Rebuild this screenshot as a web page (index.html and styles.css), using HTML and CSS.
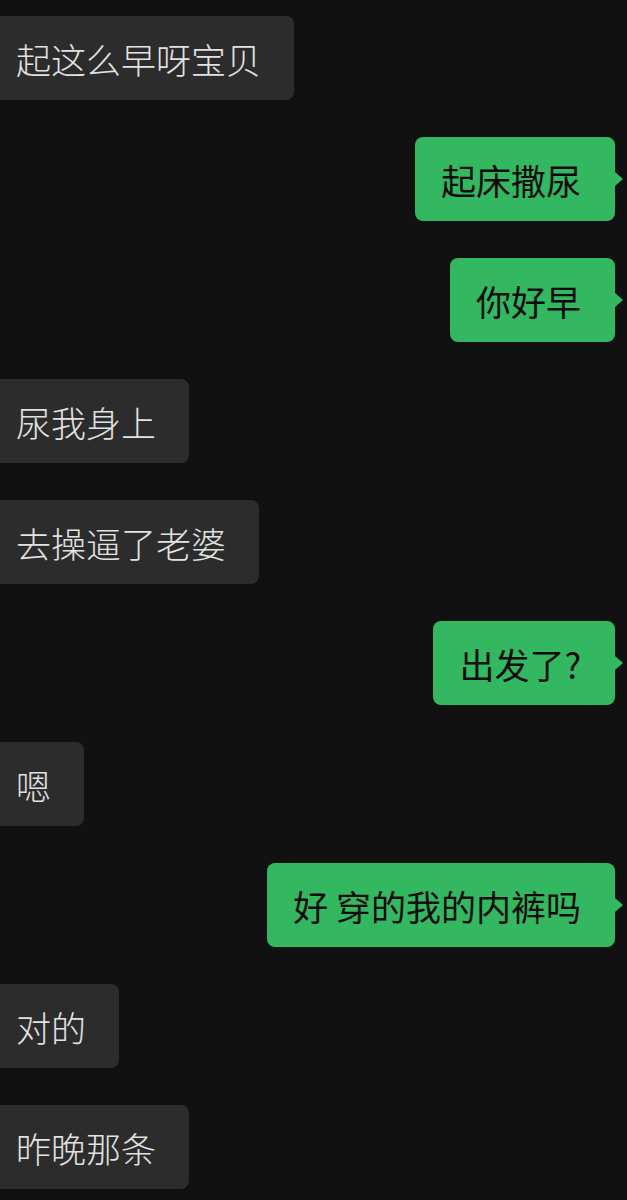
FILE: index.html
```html
<!DOCTYPE html>
<html lang="zh-CN">
  <head>
    <meta charset="UTF-8" />
    <meta name="viewport" content="width=device-width, initial-scale=1.0" />
    <title>聊天</title>
    <link rel="stylesheet" href="styles.css">
  </head>
  <body>
    <div class="chat">
      <div class="row left"><div class="bubble">起这么早呀宝贝</div></div>
      <div class="row right"><div class="bubble">起床撒尿</div></div>
      <div class="row right"><div class="bubble">你好早</div></div>
      <div class="row left"><div class="bubble">尿我身上</div></div>
      <div class="row left"><div class="bubble">去操逼了老婆</div></div>
      <div class="row right"><div class="bubble">出发了?</div></div>
      <div class="row left"><div class="bubble">嗯</div></div>
      <div class="row right"><div class="bubble">好 穿的我的内裤吗</div></div>
      <div class="row left"><div class="bubble">对的</div></div>
      <div class="row left"><div class="bubble">昨晚那条</div></div>
    </div>
  </body>
</html>
```

FILE: styles.css
```css
* {
  margin: 0;
  padding: 0;
  box-sizing: border-box;
}
body {
  background-color: #111111;
  font-family: "Noto Sans CJK SC", "Noto Sans", sans-serif;
  font-weight: 300;
  overflow: hidden;
}

.chat {
  display: flex;
  flex-direction: column;
  gap: 37px;
  padding-top: 16px;
}
.row {
  display: flex;
}
.row.right {
  justify-content: flex-end;
  padding-right: 12px;
}

.bubble {
  position: relative;
  height: 84px;
  display: flex;
  align-items: center;
  font-size: 35px;
  border-radius: 8px;
  white-space: pre;
}
.left .bubble {
  background: #2c2c2c;
  color: #e2e2e2;
  margin-left: -12px;
  padding: 0 33px 0 28px;
}
.right .bubble {
  background: #33b760;
  color: #0d0d0d;
  font-weight: 400;
  padding: 0 34px 0 26px;
}
.right .bubble::after {
  content: "";
  position: absolute;
  right: -8px;
  top: 35px;
  border-top: 7px solid transparent;
  border-bottom: 7px solid transparent;
  border-left: 8px solid #33b760;
}
```
